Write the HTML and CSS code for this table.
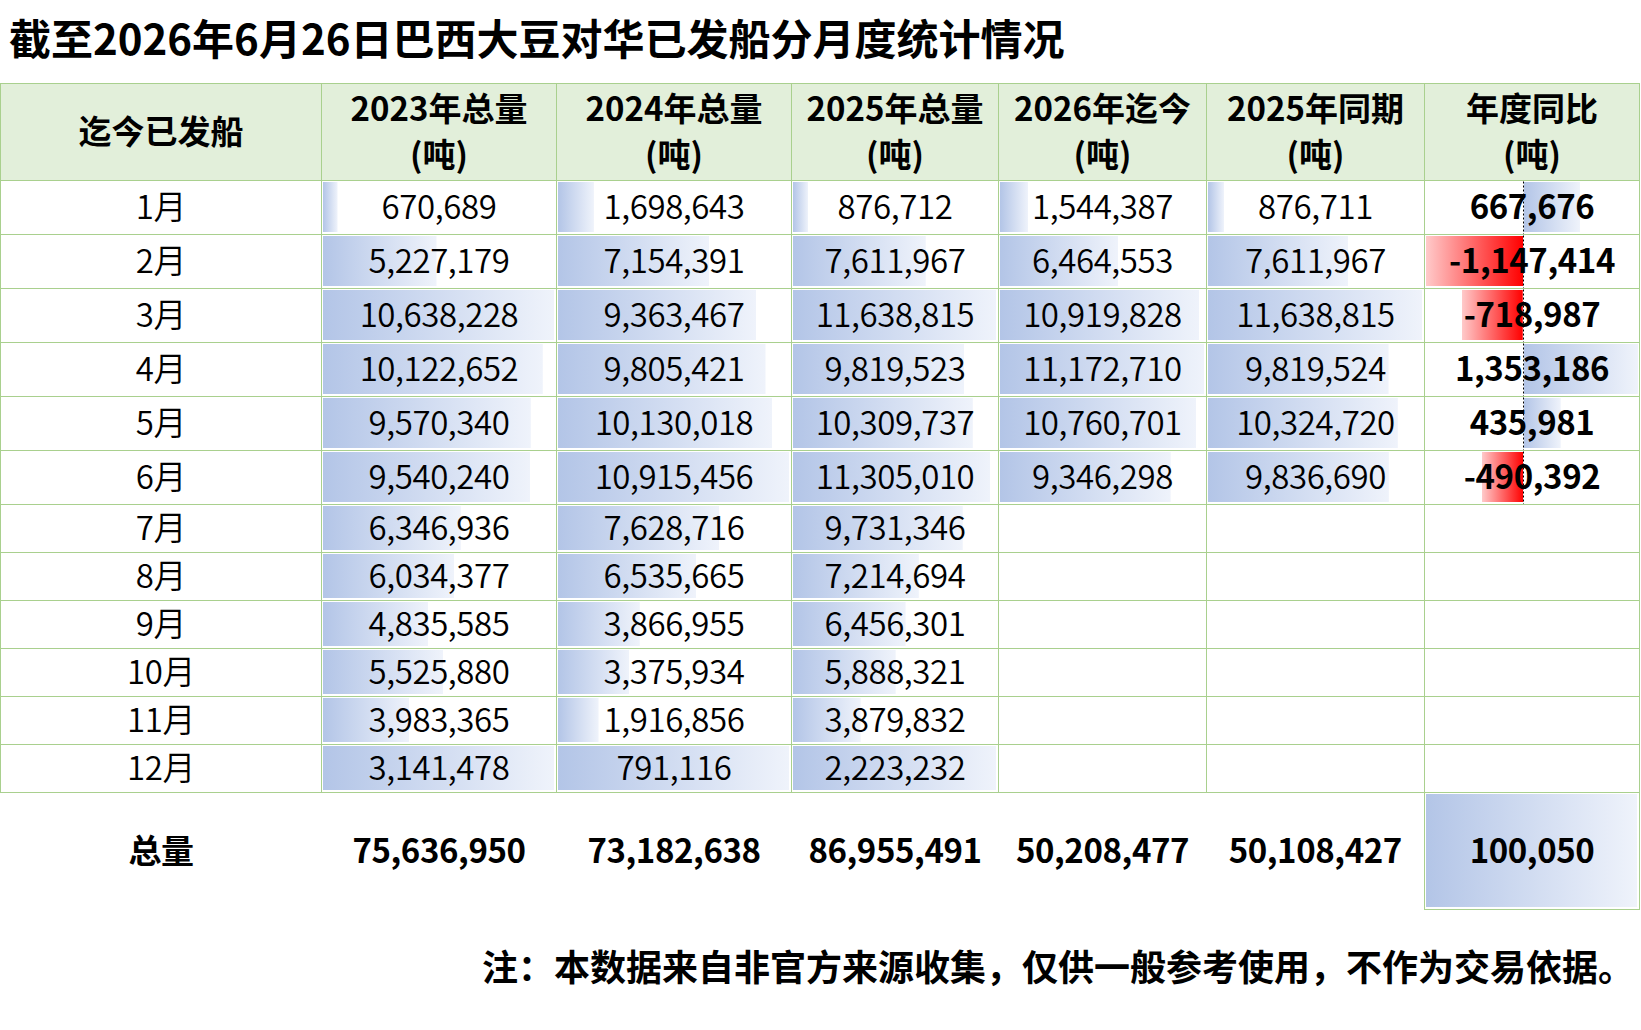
FILE: index.html
```html
<!DOCTYPE html>
<html lang="zh-CN">
<head>
<meta charset="utf-8">
<title>巴西大豆对华已发船分月度统计</title>
<link rel="stylesheet" href="styles.css">
</head>
<body>
<div class="page">
  <h1 class="title">截至2026年6月26日巴西大豆对华已发船分月度统计情况</h1>
  <table class="stats">
    <colgroup>
      <col class="c-month"><col class="c-y23"><col class="c-y24"><col class="c-y25"><col class="c-y26"><col class="c-same"><col class="c-yoy">
    </colgroup>
    <thead>
      <tr>
        <th>迄今已发船</th>
        <th>2023年总量<br>(吨)</th>
        <th>2024年总量<br>(吨)</th>
        <th>2025年总量<br>(吨)</th>
        <th>2026年迄今<br>(吨)</th>
        <th>2025年同期<br>(吨)</th>
        <th>年度同比<br>(吨)</th>
      </tr>
    </thead>
    <tbody>
      <tr class="tall">
        <td>1月</td>
        <td class="bar" style="--r:0.0630">670,689</td>
        <td class="bar" style="--r:0.1556">1,698,643</td>
        <td class="bar" style="--r:0.0753">876,712</td>
        <td class="bar" style="--r:0.1382">1,544,387</td>
        <td class="bar" style="--r:0.0753">876,711</td>
        <td class="yoy pos" style="--r:0.4934">667,676</td>
      </tr>
      <tr class="tall">
        <td>2月</td>
        <td class="bar" style="--r:0.4914">5,227,179</td>
        <td class="bar" style="--r:0.6554">7,154,391</td>
        <td class="bar" style="--r:0.6540">7,611,967</td>
        <td class="bar" style="--r:0.5786">6,464,553</td>
        <td class="bar" style="--r:0.6540">7,611,967</td>
        <td class="yoy neg" style="--r:1">-1,147,414</td>
      </tr>
      <tr class="tall">
        <td>3月</td>
        <td class="bar" style="--r:1">10,638,228</td>
        <td class="bar" style="--r:0.8578">9,363,467</td>
        <td class="bar" style="--r:1">11,638,815</td>
        <td class="bar" style="--r:0.9774">10,919,828</td>
        <td class="bar" style="--r:1">11,638,815</td>
        <td class="yoy neg" style="--r:0.6266">-718,987</td>
      </tr>
      <tr class="tall">
        <td>4月</td>
        <td class="bar" style="--r:0.9515">10,122,652</td>
        <td class="bar" style="--r:0.8983">9,805,421</td>
        <td class="bar" style="--r:0.8437">9,819,523</td>
        <td class="bar" style="--r:1">11,172,710</td>
        <td class="bar" style="--r:0.8437">9,819,524</td>
        <td class="yoy pos" style="--r:1">1,353,186</td>
      </tr>
      <tr class="tall">
        <td>5月</td>
        <td class="bar" style="--r:0.8996">9,570,340</td>
        <td class="bar" style="--r:0.9280">10,130,018</td>
        <td class="bar" style="--r:0.8858">10,309,737</td>
        <td class="bar" style="--r:0.9631">10,760,701</td>
        <td class="bar" style="--r:0.8871">10,324,720</td>
        <td class="yoy pos" style="--r:0.3222">435,981</td>
      </tr>
      <tr class="tall">
        <td>6月</td>
        <td class="bar" style="--r:0.8968">9,540,240</td>
        <td class="bar" style="--r:1">10,915,456</td>
        <td class="bar" style="--r:0.9713">11,305,010</td>
        <td class="bar" style="--r:0.8365">9,346,298</td>
        <td class="bar" style="--r:0.8452">9,836,690</td>
        <td class="yoy neg" style="--r:0.4274">-490,392</td>
      </tr>
      <tr class="short">
        <td>7月</td>
        <td class="bar" style="--r:0.5966">6,346,936</td>
        <td class="bar" style="--r:0.6989">7,628,716</td>
        <td class="bar" style="--r:0.8361">9,731,346</td>
        <td></td><td></td><td></td>
      </tr>
      <tr class="short">
        <td>8月</td>
        <td class="bar" style="--r:0.5672">6,034,377</td>
        <td class="bar" style="--r:0.5988">6,535,665</td>
        <td class="bar" style="--r:0.6199">7,214,694</td>
        <td></td><td></td><td></td>
      </tr>
      <tr class="short">
        <td>9月</td>
        <td class="bar" style="--r:0.4545">4,835,585</td>
        <td class="bar" style="--r:0.3543">3,866,955</td>
        <td class="bar" style="--r:0.5547">6,456,301</td>
        <td></td><td></td><td></td>
      </tr>
      <tr class="short">
        <td>10月</td>
        <td class="bar" style="--r:0.5194">5,525,880</td>
        <td class="bar" style="--r:0.3093">3,375,934</td>
        <td class="bar" style="--r:0.5059">5,888,321</td>
        <td></td><td></td><td></td>
      </tr>
      <tr class="short">
        <td>11月</td>
        <td class="bar" style="--r:0.3744">3,983,365</td>
        <td class="bar" style="--r:0.1756">1,916,856</td>
        <td class="bar" style="--r:0.3333">3,879,832</td>
        <td></td><td></td><td></td>
      </tr>
      <tr class="short">
        <td>12月</td>
        <td class="bar" style="--r:1">3,141,478</td>
        <td class="bar" style="--r:1">791,116</td>
        <td class="bar" style="--r:1">2,223,232</td>
        <td></td><td></td><td></td>
      </tr>
    </tbody>
    <tfoot>
      <tr class="total">
        <td>总量</td>
        <td>75,636,950</td>
        <td>73,182,638</td>
        <td>86,955,491</td>
        <td>50,208,477</td>
        <td>50,108,427</td>
        <td class="total-yoy">100,050</td>
      </tr>
    </tfoot>
  </table>
  <p class="note">注：本数据来自非官方来源收集，仅供一般参考使用，不作为交易依据。</p>
</div>
</body>
</html>
```
FILE: styles.css
```css
html, body {
  margin: 0;
  padding: 0;
  background: #ffffff;
}

body {
  font-family: "Noto Sans CJK SC", "Noto Sans", sans-serif;
  color: #000000;
}

.page {
  width: 1641px;
}

.title {
  margin: 0 0 21px 0;
  padding: 12px 0 0 9px;
  height: 50px;
  line-height: 50px;
  font-size: 42px;
  font-weight: 700;
  white-space: nowrap;
}

.stats {
  border-collapse: collapse;
  table-layout: fixed;
  width: 1639px;
  font-size: 33px;
  font-weight: 350;
  letter-spacing: -0.4px;
}

.c-month { width: 321px; }
.c-y23 { width: 235px; }
.c-y24 { width: 235px; }
.c-y25 { width: 207px; }
.c-y26 { width: 208px; }
.c-same { width: 218px; }
.c-yoy { width: 215px; }

.stats th,
.stats td {
  border: 1px solid #a9d08e;
  padding: 0;
  text-align: center;
  vertical-align: middle;
  white-space: nowrap;
}

.stats th {
  height: 92px;
  padding-bottom: 4px;
  line-height: 46px;
  background: #e2efda;
  font-weight: 700;
  letter-spacing: 0;
}

.stats tbody td {
  line-height: 40px;
  padding-bottom: 5px;
}

.tall td { height: 48px; }
.short td { height: 42px; }

.bar {
  background-image: linear-gradient(to right, #b3c5e7, #eff3fb);
  background-repeat: no-repeat;
  background-position: 1px 1px;
  background-size: calc((100% - 3px) * var(--r)) calc(100% - 3px);
}

.stats tbody td.yoy {
  font-weight: 700;
  background-repeat: repeat-y, no-repeat;
}

.yoy.pos {
  background-image:
    linear-gradient(to bottom, #000 0 2px, transparent 2px 4px),
    linear-gradient(to right, #b3c5e7, #eff3fb);
  background-size: 1px 4px, calc(114px * var(--r)) calc(100% - 3px);
  background-position: 98px 0, 99px 1px;
}

.yoy.neg {
  background-image:
    linear-gradient(to bottom, #000 0 2px, transparent 2px 4px),
    linear-gradient(to right, #ffcaca, #ff0000);
  background-size: 1px 4px, calc(97px * var(--r)) calc(100% - 3px);
  background-position: 98px 0, calc(98px - 97px * var(--r)) 1px;
}

.total td {
  border: none;
  height: 111px;
  padding-bottom: 5px;
  font-weight: 700;
}

.total td.total-yoy {
  border: 1px solid #a9d08e;
  border-top: none;
  background-image: linear-gradient(to right, #b3c5e7, #eff3fb);
  background-repeat: no-repeat;
  background-position: 1px 1px;
  background-size: calc(100% - 3px) calc(100% - 3px);
}

.note {
  margin: 30px 0 0 0;
  width: 1639px;
  padding-right: 5px;
  box-sizing: border-box;
  line-height: 50px;
  font-size: 36px;
  font-weight: 700;
  text-align: right;
  white-space: nowrap;
}
```
